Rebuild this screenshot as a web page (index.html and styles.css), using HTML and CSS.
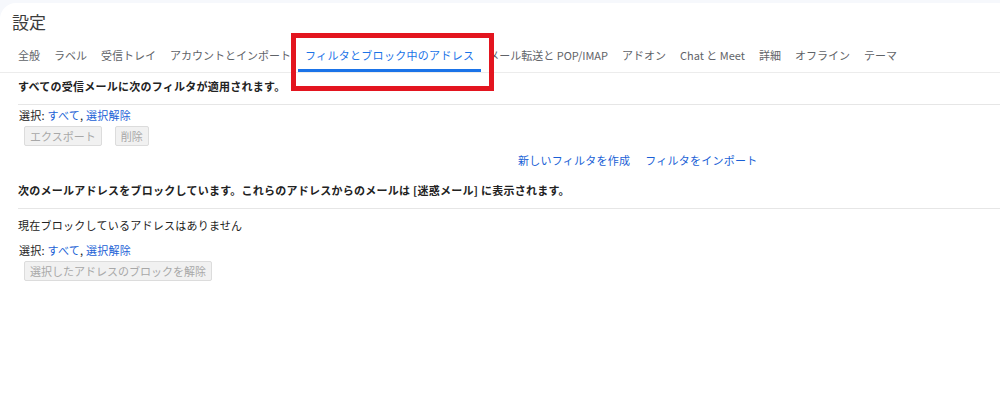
FILE: index.html
```html
<!DOCTYPE html>
<html lang="ja">
<head>
<meta charset="utf-8">
<link rel="stylesheet" href="styles.css">
</head>
<body>
<div class="card">
  <h1 class="title">設定</h1>
  <nav class="tabs">
    <span class="tab">全般</span>
    <span class="tab">ラベル</span>
    <span class="tab">受信トレイ</span>
    <span class="tab">アカウントとインポート</span>
    <span class="tab active">フィルタとブロック中のアドレス</span>
    <span class="tab">メール転送と POP/IMAP</span>
    <span class="tab">アドオン</span>
    <span class="tab">Chat と Meet</span>
    <span class="tab">詳細</span>
    <span class="tab">オフライン</span>
    <span class="tab">テーマ</span>
  </nav>
  <div class="content">
    <div class="section-head">すべての受信メールに次のフィルタが適用されます。</div>
    <div class="select">選択: <a class="link">すべて</a>, <a class="link">選択解除</a></div>
    <div class="buttons">
      <span class="btn">エクスポート</span>
      <span class="btn">削除</span>
    </div>
    <div class="actions">
      <a class="link">新しいフィルタを作成</a>
      <a class="link">フィルタをインポート</a>
    </div>
    <div class="section-head">次のメールアドレスをブロックしています。これらのアドレスからのメールは [迷惑メール] に表示されます。</div>
    <div class="empty">現在ブロックしているアドレスはありません</div>
    <div class="select">選択: <a class="link">すべて</a>, <a class="link">選択解除</a></div>
    <div class="buttons">
      <span class="btn">選択したアドレスのブロックを解除</span>
    </div>
  </div>
  <div class="highlight"></div>
</div>
</body>
</html>
```
FILE: styles.css
```css
* { box-sizing: border-box; }
html, body { margin: 0; padding: 0; }
body {
  background: #f6f8fc;
  font-family: "Noto Sans CJK JP", "Liberation Sans", sans-serif;
  color: #222;
  width: 1000px;
  height: 400px;
  overflow: hidden;
}
.card {
  position: relative;
  margin-top: 3px;
  height: 397px;
  background: #fff;
  border-top-left-radius: 16px;
}
.title {
  margin: 0;
  padding: 6px 0 0 12px;
  font-size: 17px;
  font-weight: 400;
  line-height: 26px;
  color: #3c3c3c;
}
.tabs {
  display: flex;
  margin-top: 6px;
  padding-left: 11px;
  border-bottom: 1px solid #ececec;
  height: 32px;
}
.tab {
  display: block;
  padding: 0 7px;
  font-size: 11px;
  line-height: 29px;
  height: 31px;
  color: #5f6368;
  white-space: nowrap;
  border-bottom: 3px solid transparent;
}
.tab.active {
  color: #1a73e8;
  letter-spacing: 0.3px;
  border-bottom-color: #1a73e8;
}
.content {
  padding-left: 18px;
  font-size: 11px;
  letter-spacing: 0.25px;
}
.section-head {
  font-weight: 700;
  line-height: 16px;
  padding: 5px 0 10px;
  border-bottom: 1px solid #e6e6e6;
  color: #222;
}
.select {
  margin-top: 2px;
  line-height: 16px;
  padding-left: 1px;
  color: #222;
}
.link { color: #1a5fd6; text-decoration: none; }
.buttons {
  display: flex;
  gap: 13px;
  padding-left: 6px;
  margin-top: 3px;
}
.btn {
  display: block;
  height: 20px;
  line-height: 18px;
  padding: 0 5px;
  background: #f1f1f1;
  border: 1px solid #dcdcdc;
  border-radius: 2px;
  color: #a8a8a8;
  font-size: 11px;
  letter-spacing: 0;
}
.actions {
  display: flex;
  gap: 15px;
  padding-left: 500px;
  margin-top: 6px;
  line-height: 16px;
}
.actions + .section-head { margin-top: 9px; }
.empty {
  line-height: 16px;
  margin-top: 8px;
  margin-bottom: 9px;
}
.highlight {
  position: absolute;
  left: 291px;
  top: 30px;
  width: 203px;
  height: 58px;
  border: 5px solid #e3151f;
}
```
